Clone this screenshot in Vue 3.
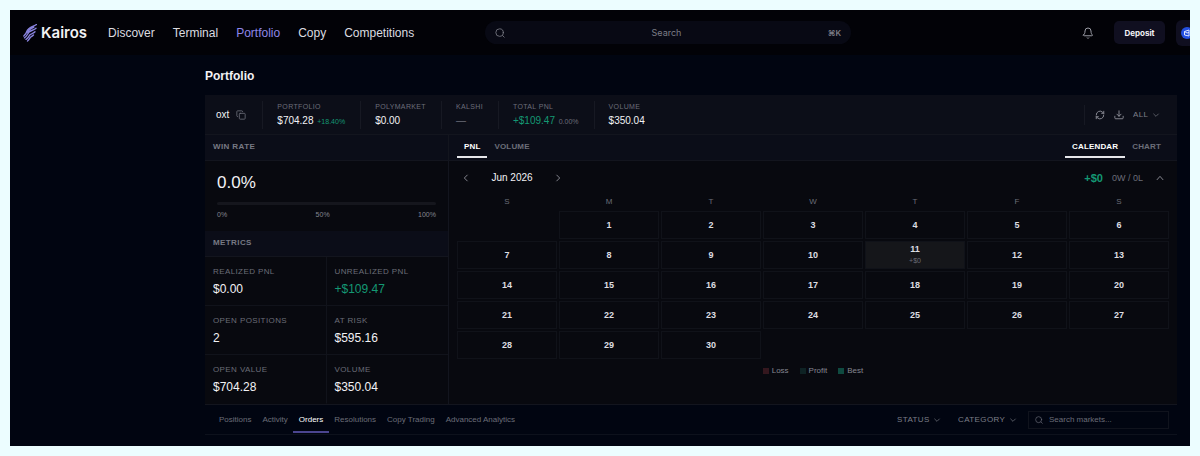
<template>
  <div class="app">
    <header class="topbar">
      <a class="brand" href="#">
        <svg class="wing" viewBox="0 0 14 18">
          <path d="M13.500.5C10.500 2.500 5 3 3.800 7.500 3.300 9.500 2.500 10.500.8 12" />
          <path d="M13 4.300C11 6.300 7.500 6.300 5.800 8.300 4.500 10 4 12 1.500 13.800" />
          <path d="M12 7.800c-1.500 1.700-3.600 1.700-5 3-1.200 1.200-1.700 3-4 4.500" />
          <path d="M10.500 11c-1.300 1.300-2.300 1.400-3.300 2.500-.8 1-1.200 2.300-2.700 3.500" />
          <path class="thick" d="M10.500 3C7.500 4.200 5.500 5.300 4.800 8" />
        </svg>
        <span>Kairos</span>
      </a>
      <nav class="nav">
        <a v-for="n in nav" :key="n" href="#" :class="{ active: n === 'Portfolio' }">{{ n }}</a>
      </nav>
      <label class="search">
        <svg class="icon i10" viewBox="0 0 24 24"><circle cx="11" cy="11" r="9" /><path d="m22 22-4-4" /></svg>
        <input type="text" placeholder="Search" aria-label="Search" />
        <kbd>⌘K</kbd>
      </label>
      <div class="actions">
        <button class="plain bell" aria-label="Notifications">
          <svg class="icon i12" viewBox="0 0 24 24"><path d="M10.300 22a2 2 0 0 0 3.400 0M3 16c0 1 .5 1.500 1.500 1.500h15c1 0 1.500-.5 1.500-1.500-1.500-1.500-3-3-3-8A6 6 0 0 0 6 8c0 5-1.500 6.500-3 8z" /></svg>
        </button>
        <button class="deposit">Deposit</button>
        <button class="account" aria-label="Account">
          <svg viewBox="0 0 12 12">
            <circle cx="6" cy="6" r="6" fill="#2450e0" />
            <path d="M3.500 4.500 8 3v6L3.500 8zM3.500 4.500 6 6l2-.5" fill="none" stroke="#dfe6ff" />
          </svg>
        </button>
      </div>
    </header>

    <main class="page">
      <h1>Portfolio</h1>

      <section class="summary">
        <div class="user">
          oxt
          <button class="plain" aria-label="Copy name">
            <svg class="icon i10" viewBox="0 0 24 24"><rect x="8" y="8" width="14" height="14" rx="2" /><path d="M4 16a2 2 0 0 1-2-2V4a2 2 0 0 1 2-2h10a2 2 0 0 1 2 2" /></svg>
          </button>
        </div>
        <div v-for="s in stats" :key="s.label" class="stat">
          <div class="stat-label">{{ s.label }}</div>
          <div class="stat-value" :class="s.tone">
            {{ s.value }} <small v-if="s.note" :class="s.noteTone">{{ s.note }}</small>
          </div>
        </div>
        <div class="tools">
          <button class="plain" aria-label="Refresh">
            <svg class="icon i10" viewBox="0 0 24 24"><path d="M3 12a9 9 0 0 1 15.500-6.500L21 8M21 3v5h-5M21 12a9 9 0 0 1-15.500 6.500L3 16M3 21v-5h5" /></svg>
          </button>
          <button class="plain" aria-label="Download">
            <svg class="icon i10" viewBox="0 0 24 24"><path d="M12 2v13M7 10l5 5 5-5M2 15v4a2 2 0 0 0 2 2h16a2 2 0 0 0 2-2v-4" /></svg>
          </button>
          <label class="pick">
            <select aria-label="Range"><option>ALL</option></select>
            <svg class="icon i8" viewBox="0 0 24 24"><path d="m5 9 7 7 7-7" /></svg>
          </label>
        </div>
      </section>

      <div class="board">
        <aside class="side">
          <h2>WIN RATE</h2>
          <div class="winrate">
            <div class="rate">0.0%</div>
            <div class="track"><div class="fill" :style="{ width: winRate + '%' }"></div></div>
            <div class="scale"><span>0%</span><span>50%</span><span>100%</span></div>
          </div>
          <h2>METRICS</h2>
          <dl class="metrics">
            <div v-for="m in metrics" :key="m.label">
              <dt>{{ m.label }}</dt>
              <dd :class="m.tone">{{ m.value }}</dd>
            </div>
          </dl>
        </aside>

        <section class="results">
          <div class="tabs">
            <button v-for="t in ['PNL', 'VOLUME']" :key="t" :class="{ on: t === series }" @click="series = t">{{ t }}</button>
            <span class="grow"></span>
            <button v-for="t in ['CALENDAR', 'CHART']" :key="t" :class="{ on: t === view }" @click="view = t">{{ t }}</button>
          </div>
          <div class="month">
            <button class="plain" aria-label="Previous month">
              <svg class="icon i10" viewBox="0 0 24 24"><path d="m15 5-7 7 7 7" /></svg>
            </button>
            <span class="month-name">Jun 2026</span>
            <button class="plain" aria-label="Next month">
              <svg class="icon i10" viewBox="0 0 24 24"><path d="m9 5 7 7-7 7" /></svg>
            </button>
            <span class="grow"></span>
            <strong class="up">+$0</strong>
            <span class="record">0W / 0L</span>
            <button class="plain" aria-label="Collapse">
              <svg class="icon i10" viewBox="0 0 24 24"><path d="m5 16 7-8 7 8" /></svg>
            </button>
          </div>
          <table class="calendar">
            <thead>
              <tr><th v-for="(d, i) in days" :key="i">{{ d }}</th></tr>
            </thead>
            <tbody>
              <tr v-for="(week, w) in weeks" :key="w">
                <td v-for="(day, i) in week" :key="i" :class="{ blank: !day, today: day === 11 }">
                  {{ day || '' }}
                  <small v-if="day === 11">+$0</small>
                </td>
              </tr>
            </tbody>
          </table>
          <div class="legend">
            <span class="loss">Loss</span>
            <span class="profit">Profit</span>
            <span class="best">Best</span>
          </div>
        </section>
      </div>

      <div class="orders">
        <div class="order-tabs">
          <button v-for="t in orderTabs" :key="t" :class="{ on: t === tab }" @click="tab = t">{{ t }}</button>
        </div>
        <label v-for="f in ['STATUS', 'CATEGORY']" :key="f" class="pick filter">
          <select :aria-label="f"><option>{{ f }}</option></select>
          <svg class="icon i8" viewBox="0 0 24 24"><path d="m5 9 7 7 7-7" /></svg>
        </label>
        <label class="market">
          <svg class="icon i8" viewBox="0 0 24 24"><circle cx="11" cy="11" r="9" /><path d="m22 22-4-4" /></svg>
          <input type="text" placeholder="Search markets..." aria-label="Search markets" />
        </label>
      </div>
    </main>
  </div>
</template>

<script setup>
import { ref, computed } from 'vue'

const nav = ['Discover', 'Terminal', 'Portfolio', 'Copy', 'Competitions']
const orderTabs = ['Positions', 'Activity', 'Orders', 'Resolutions', 'Copy Trading', 'Advanced Analytics']
const days = ['S', 'M', 'T', 'W', 'T', 'F', 'S']

const series = ref('PNL')
const view = ref('CALENDAR')
const tab = ref('Orders')
const winRate = ref(0)

const stats = [
  { label: 'PORTFOLIO', value: '$704.28', note: '+18.40%', noteTone: 'up' },
  { label: 'POLYMARKET', value: '$0.00' },
  { label: 'KALSHI', value: '—', tone: 'muted' },
  { label: 'TOTAL PNL', value: '+$109.47', tone: 'up', note: '0.00%', noteTone: 'muted' },
  { label: 'VOLUME', value: '$350.04' }
]

const metrics = [
  { label: 'REALIZED PNL', value: '$0.00' },
  { label: 'UNREALIZED PNL', value: '+$109.47', tone: 'up' },
  { label: 'OPEN POSITIONS', value: '2' },
  { label: 'AT RISK', value: '$595.16' },
  { label: 'OPEN VALUE', value: '$704.28' },
  { label: 'VOLUME', value: '$350.04' }
]

// June 2026 starts on a Monday
const weeks = computed(() => {
  const rows = []
  for (let start = 0; start <= 30; start += 7) {
    const row = []
    for (let i = start; i < start + 7; i++) {
      row.push(i > 0 && i <= 30 ? i : null)
    }
    rows.push(row)
  }
  return rows
})
</script>

<style>
body {
  background: #ecfdff;
}
</style>

<style scoped>
.app {
  margin: 10px;
  overflow: hidden;
  background: #010511;
  color: #f2f2f5;
  font-family: "Liberation Sans", Arial, sans-serif;
  font-size: 8px;
  line-height: 10px;
}
.app * {
  box-sizing: border-box;
}
button,
input,
select {
  font: inherit;
  color: inherit;
  background: none;
  border: 0;
  padding: 0;
  margin: 0;
  outline: 0;
}
input {
  min-width: 0;
}
a {
  color: inherit;
  text-decoration: none;
}
.icon {
  display: block;
  flex: none;
  fill: none;
  stroke: currentColor;
  stroke-width: 2;
  stroke-linecap: round;
  stroke-linejoin: round;
}
.i8 {
  width: 8px;
  height: 8px;
}
.i10 {
  width: 10px;
  height: 10px;
}
.i12 {
  width: 12px;
  height: 12px;
}
.plain {
  display: flex;
  color: #9a9ba5;
}
.grow {
  flex: 1;
}
.up {
  color: #149873;
}
.muted {
  color: #6b6d78;
}

.topbar {
  display: flex;
  align-items: center;
  height: 45px;
  padding-left: 13px;
  background: #020207;
}
.brand {
  display: flex;
  align-items: center;
  gap: 4px;
  font: 600 15px/20px Inter, sans-serif;
}
.wing {
  width: 14px;
  height: 18px;
  fill: none;
  stroke: #8882dc;
  stroke-width: 1.4;
  stroke-linecap: round;
}
.wing .thick {
  stroke-width: 2;
}
.nav {
  display: flex;
  gap: 18px;
  margin-left: 21px;
  font-size: 12px;
  line-height: 16px;
  color: #dcdce0;
}
.nav .active {
  color: #8f86e8;
}
.search {
  display: flex;
  align-items: center;
  flex: 0 1 366px;
  height: 23px;
  margin-left: 71px;
  padding: 0 10px;
  border-radius: 12px;
  background: #080914;
  color: #7c7d87;
  font: 9px/12px Inter, sans-serif;
}
.search input {
  flex: 1;
  text-align: center;
}
.search kbd {
  font: 600 8px/12px Inter, sans-serif;
}
input::placeholder {
  color: inherit;
  opacity: 1;
}
.actions {
  display: flex;
  align-items: center;
  flex: none;
  margin-left: auto;
  margin-right: -14px;
}
.bell {
  margin-right: 20px;
}
.deposit {
  width: 51px;
  height: 23px;
  border-radius: 5px;
  background: #100f20;
  font: 700 8px/12px Inter, sans-serif;
}
.account {
  width: 28px;
  height: 26px;
  margin-left: 11px;
  padding-left: 5px;
  border-radius: 6px;
  background: #100f20;
}
.account svg {
  display: block;
  width: 12px;
  height: 12px;
}

.page {
  padding: 14px 13px 11px 195px;
}
h1 {
  margin: 0 0 11px;
  font-size: 12px;
  line-height: 15px;
}
.summary {
  display: flex;
  align-items: center;
  height: 39px;
  padding: 0 11px;
  background: #0c0e18;
}
.user {
  display: flex;
  align-items: center;
  gap: 7px;
  padding-right: 16px;
  font-size: 10px;
}
.stat {
  height: 28px;
  padding: 1px 15px 0 14px;
  border-left: 1px solid #171923;
}
.user .plain,
.stat-label {
  color: #6b6d78;
}
.stat-label {
  font-size: 7px;
  letter-spacing: 0.05em;
}
.stat-value {
  margin-top: 3px;
  font-size: 10px;
  line-height: 12px;
  white-space: nowrap;
}
.stat-value small {
  margin-left: 1px;
  font-size: 7px;
}
.tools {
  display: flex;
  align-items: center;
  gap: 9px;
  height: 20px;
  margin-left: auto;
  padding: 0 6px 0 10px;
  border-left: 1px solid #171923;
}
.pick {
  display: flex;
  align-items: center;
  gap: 3px;
  color: #7c7e88;
}
.pick select {
  appearance: none;
  letter-spacing: 0.05em;
}

.board {
  display: grid;
  grid-template-columns: 1fr 3fr;
  border: solid #13151e;
  border-width: 1px 0;
  background: #08090f;
}
h2 {
  margin: 0;
  padding: 7px 8px 8px;
  border-bottom: 1px solid #13151e;
  background: #0b0d18;
  color: #777984;
  font-size: 8px;
  line-height: 10px;
  letter-spacing: 0.05em;
}
.winrate {
  height: 70px;
  padding: 12px 12px 0;
}
.rate {
  font-size: 17px;
  line-height: 20px;
}
.track {
  height: 3px;
  margin: 9px 0 5px;
  border-radius: 2px;
  background: #15161d;
}
.fill {
  height: 100%;
  background: #149873;
}
.scale {
  display: flex;
  justify-content: space-between;
  color: #858791;
  font-size: 7px;
}
.metrics {
  display: grid;
  grid-template-columns: 1fr 1fr;
  margin: 0;
}
.metrics > div {
  padding: 10px 8px 8px;
  border-right: 1px solid #11131b;
  border-bottom: 1px solid #11131b;
}
.metrics > div:nth-child(2n) {
  border-right: 0;
}
.metrics > div:nth-last-child(-n + 2) {
  border-bottom-color: transparent;
}
dt {
  color: #6b6d78;
  letter-spacing: 0.05em;
}
dd {
  margin: 5px 0 0;
  font-size: 12px;
  line-height: 15px;
}

.results {
  border-left: 1px solid #13151e;
}
.tabs {
  display: flex;
  height: 26px;
  padding: 0 9px 0 8px;
  border-bottom: 1px solid #13151e;
  background: #0b0d18;
}
.tabs button {
  height: 23px;
  padding: 2px 7px 0;
  border-bottom: 2px solid transparent;
  color: #6b6d78;
  font-weight: 700;
  letter-spacing: 0.02em;
}
.tabs button.on {
  border-bottom-color: #e6e6ea;
  color: #fff;
}
.month {
  display: flex;
  align-items: center;
  height: 34px;
  padding: 0 12px;
}
.month-name {
  width: 82px;
  font-size: 10px;
  text-align: center;
}
.month strong {
  font-size: 11px;
}
.record {
  margin: 0 12px 0 9px;
  color: #6b6d78;
  font-size: 9px;
}
.calendar {
  width: calc(100% - 12px);
  margin: 0 6px;
  table-layout: fixed;
  border-spacing: 2px;
}
th {
  height: 12px;
  padding: 0;
  color: #6b6d78;
  font-weight: 400;
  vertical-align: top;
}
td {
  height: 28px;
  padding: 0;
  border: 1px solid #101219;
  color: #dddde2;
  font-size: 9px;
  font-weight: 700;
  text-align: center;
}
td.blank {
  border-color: transparent;
}
td.today {
  background: #15161a;
}
td small {
  display: block;
  color: #6b6d78;
  font-size: 7px;
  font-weight: 400;
  line-height: 13px;
}
.legend {
  display: flex;
  justify-content: center;
  gap: 11px;
  margin-top: 5px;
  color: #858791;
}
.legend span {
  display: flex;
  align-items: center;
  gap: 3px;
}
.legend span::before {
  content: "";
  width: 6px;
  height: 6px;
  background: #34171e;
}
.legend .profit::before {
  background: #0e2224;
}
.legend .best::before {
  background: #0f4a40;
}

.orders {
  display: flex;
  align-items: center;
  height: 30px;
  padding: 0 8px;
  border-bottom: 1px solid #0d111c;
}
.order-tabs {
  display: flex;
  align-self: stretch;
  margin-right: auto;
}
.order-tabs button {
  height: 28px;
  padding: 4px 6px 0;
  border-bottom: 2px solid transparent;
  color: #6b6d78;
}
.order-tabs button + button {
  margin-left: -1px;
}
.order-tabs button.on {
  border-bottom-color: #4b4590;
  color: #fff;
}
.filter {
  margin-right: 17px;
}
.filter + .market {
  margin-left: -6px;
}
.market {
  display: flex;
  align-items: center;
  gap: 6px;
  width: 141px;
  height: 18px;
  padding: 0 6px;
  border: 1px solid #10131d;
  color: #6b6d78;
}
</style>
